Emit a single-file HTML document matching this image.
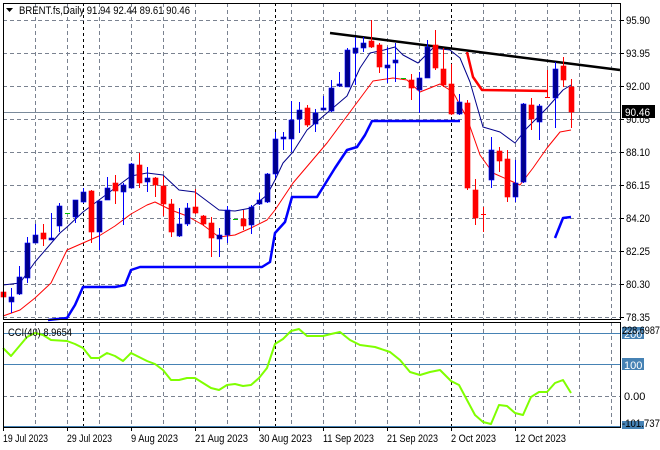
<!DOCTYPE html>
<html><head><meta charset="utf-8"><style>
html,body{margin:0;padding:0;background:#fff;}
svg{display:block;font-family:"Liberation Sans",sans-serif;font-size:11px;}
</style></head><body>
<svg id="s" width="660" height="450" viewBox="0 0 660 450" xmlns="http://www.w3.org/2000/svg">
<rect width="660" height="450" fill="#fff"/>
<g id="grid" stroke="#7a8290" stroke-width="1" stroke-dasharray="4,3"></g>
<g id="dark" stroke="#000" stroke-width="1" stroke-dasharray="3,3"></g>
<line x1="3" y1="112.5" x2="620" y2="112.5" stroke="#7a8a9a" stroke-width="1"/>
<line x1="3" y1="333.5" x2="620" y2="333.5" stroke="#4682b4"/>
<line x1="3" y1="364.5" x2="620" y2="364.5" stroke="#4682b4"/>
<line x1="3" y1="426.5" x2="620" y2="426.5" stroke="#4682b4"/>
<g id="ind" fill="none"></g>
<g id="candles"></g>
<rect x="3.5" y="3.5" width="617" height="316" fill="none" stroke="#000"/>
<rect x="3.5" y="322.5" width="617" height="105" fill="none" stroke="#000"/>
<g id="axis" fill="#000"></g>
<text x="19" y="14" fill="#000" textLength="171" lengthAdjust="spacingAndGlyphs">BRENT.fs,Daily  91.94 92.44 89.61 90.46</text>
<path d="M6 8 L13 8 L9.5 12 Z" fill="#000"/>
<text x="8" y="336" fill="#000" textLength="64" lengthAdjust="spacingAndGlyphs">CCI(40) 8.9654</text>
</svg>
<script>
var NS="http://www.w3.org/2000/svg";
function el(p,t,a,txt){var e=document.createElementNS(NS,t);for(var k in a)e.setAttribute(k,a[k]);if(txt!==undefined)e.textContent=txt;document.getElementById(p).appendChild(e);return e;}
var hy=[20,53,86,119,152,185,218,251,284,317];
hy.forEach(function(y){el('grid','line',{x1:3,x2:620,y1:y+.5,y2:y+.5});});
[396].forEach(function(y){el('grid','line',{x1:3,x2:620,y1:y+.5,y2:y+.5});});
for(var x=35;x<620;x+=32){if(x==451)continue;el('grid','line',{x1:x+.5,x2:x+.5,y1:3,y2:320});el('grid','line',{x1:x+.5,x2:x+.5,y1:322,y2:427});}
[83,275,451].forEach(function(x){el('dark','line',{x1:x+.5,x2:x+.5,y1:3,y2:320});el('dark','line',{x1:x+.5,x2:x+.5,y1:322,y2:427});});
var C=[['r',292,297,273,304],['b',297,302,288,313],['b',277,294,266,295],['b',243,278,237,283],['b',235,243,224,243],['r',233,239,224,246],['b',238,240,213,239],['b',206,226,203,232],['g',213,213,213,213],['b',200,217,200,223],['b',192,202,188,203],['r',191,232,190,243],['b',201,232,201,250],['b',188,200,177,200],['r',183,191,175,204],['b',185,192,183,225],['b',164,188,163,188],['r',165,183,153,188],['b',178,182,167,192],['r',178,185,177,197],['r',186,204,176,216],['r',204,232,199,237],['b',224,236,208,237],['b',208,224,203,226],['r',207,213,189,214],['r',216,224,215,226],['r',223,238,217,257],['b',235,239,228,257],['b',210,235,206,243],['g',219,219,219,219],['r',219,226,210,230],['b',207,225,205,234],['b',200,204,193,205],['b',174,202,173,203],['b',139,174,132,178],['b',137,139,132,150],['b',120,139,101,152],['b',110,119,102,133],['r',108,125,105,127],['b',113,124,109,132],['b',108,110,96,110],['b',88,111,80,112],['b',84,86,72,87],['b',50,87,48,87],['b',48,53,37,85],['b',43,48,37,52],['r',41,47,20,48],['r',45,67,43,73],['b',65,68,47,83],['b',60,63,43,82],['g',78,78,78,78],['r',80,88,74,100],['b',78,90,72,113],['b',47,78,40,78],['r',45,68,30,70],['r',69,85,48,87],['r',84,114,64,115],['b',102,114,94,115],['r',103,188,100,190],['r',190,218,179,225],['d',214,214,207,232],['b',150,180,137,188],['r',151,161,147,172],['r',159,197,150,202],['b',183,197,160,202],['b',104,182,103,183],['r',105,119,98,130],['b',106,122,104,140],['d',97,97,70,98],['b',69,98,62,128],['r',66,80,57,87],['r',87,112,79,128]];
C.forEach(function(c,i){var x=3+8*i;var col=c[0]=='b'?'#0000ff':(c[0]=='g'?'#00c000':'#ff0000');
 if(c[3]!=c[4])el('candles','line',{x1:x+.5,x2:x+.5,y1:c[3],y2:c[4],stroke:col});
 if(c[0]=='g'||c[0]=='d'){el('candles','line',{x1:x-2,x2:x+3,y1:c[1]+.5,y2:c[1]+.5,stroke:col});}
 else{var h=Math.max(c[2]-c[1],2);el('candles','rect',{x:x-2,y:c[1],width:5,height:h,fill:c[0]=='b'?'#00008b':'#ff0000',stroke:c[0]=='b'?'#0000ff':'#ff0000','stroke-width':.6});}
});
function pl(pts,col,w){el('ind','polyline',{points:pts.map(function(p){return p.join(',')}).join(' '),stroke:col,'stroke-width':w,'stroke-linejoin':'round'});}
pl([[3,285],[20,283],[35,262],[60,233],[67,227],[83,212],[99,200],[115,188],[131,176],[147,173],[163,175],[179,190],[195,192],[219,210],[235,211],[251,208],[267,195],[275,180],[283,163],[293,152],[307,130],[327,113],[347,96],[360,68],[370,53],[384,50],[395,47],[403,55],[418,63],[433,48],[450,50],[460,58],[470,82],[483,127],[500,132],[515,143],[527,128],[547,108],[563,90],[571,85]],'#00008b',1);
pl([[3,316],[20,310],[35,298],[51,283],[67,250],[83,243],[99,236],[115,226],[131,214],[147,205],[155,202],[171,210],[187,216],[203,225],[219,237],[235,235],[251,228],[267,220],[275,210],[293,183],[327,143],[350,112],[373,81],[393,78],[407,80],[420,92],[440,84],[453,92],[467,118],[480,155],[493,173],[520,185],[533,168],[547,148],[560,132],[571,130]],'#ff0000',1);
pl([[48,320],[67,318],[75,305],[83,287],[115,287],[125,285],[131,270],[140,267],[262,267],[270,262],[275,233],[285,222],[292,197],[317,197],[335,168],[347,150],[357,147],[365,135],[372,121],[460,121]],'#0000ff',2.5);
pl([[555,238],[563,218],[571,217]],'#0000ff',2.5);
pl([[467,52],[473,77],[482,90],[547,91]],'#ff0000',2.5);
pl([[330,33],[620,70]],'#000',2.5);
pl([[3,348],[11,356],[27,337],[35,333],[43,335],[51,340],[67,341],[75,344],[83,348],[91,358],[99,358],[107,353],[115,356],[123,361],[131,353],[139,357],[147,361],[155,364],[163,370],[171,380],[179,380],[187,378],[195,378],[203,383],[211,388],[219,390],[227,385],[235,384],[243,386],[251,385],[259,378],[267,368],[275,344],[283,339],[291,331],[299,329],[307,336],[323,336],[331,334],[340,332],[350,340],[360,345],[375,347],[390,352],[400,360],[410,372],[420,375],[430,372],[440,370],[451,381],[459,385],[467,400],[475,415],[483,422],[491,424],[499,405],[507,406],[515,413],[523,415],[531,397],[539,392],[547,392],[555,383],[563,380],[571,393]],'#7fff00',2);
var P=['95.90','93.95','92.00','90.05','88.10','86.15','84.20','82.25','80.30','78.35'];
P.forEach(function(t,i){var y=hy[i];el('axis','line',{x1:620,x2:624,y1:y+.5,y2:y+.5,stroke:'#000'});el('axis','text',{x:626,y:y+4,textLength:24,lengthAdjust:'spacingAndGlyphs'},t);});
el('axis','rect',{x:622,y:105,width:33,height:13,fill:'#000'});el('axis','text',{x:625,y:116,fill:'#fff',textLength:25,lengthAdjust:'spacingAndGlyphs'},'90.46');
el('axis','rect',{x:622,y:327,width:22,height:12,fill:'#4682b4'});el('axis','text',{x:624,y:338,fill:'#fff'},'200');
el('axis','text',{x:622,y:334,textLength:38,lengthAdjust:'spacingAndGlyphs'},'228.6987');
el('axis','rect',{x:622,y:358,width:22,height:12,fill:'#4682b4'});el('axis','text',{x:624,y:369,fill:'#fff'},'100');
el('axis','text',{x:624,y:400},'0.00');
el('axis','rect',{x:622,y:421,width:22,height:8,fill:'#4682b4'});el('axis','text',{x:622,y:427,textLength:38,lengthAdjust:'spacingAndGlyphs'},'-101.737');
[[3,'19 Jul 2023',45],[67,'29 Jul 2023',45],[131,'9 Aug 2023',47],[195,'21 Aug 2023',53],[259,'30 Aug 2023',53],[323,'11 Sep 2023',51],[387,'21 Sep 2023',51],[451,'2 Oct 2023',45],[515,'12 Oct 2023',51]].forEach(function(d){el('axis','line',{x1:d[0]+.5,x2:d[0]+.5,y1:427,y2:431,stroke:'#000'});el('axis','text',{x:d[0],y:442,textLength:d[2],lengthAdjust:'spacingAndGlyphs'},d[1]);});
</script>
</body></html>
